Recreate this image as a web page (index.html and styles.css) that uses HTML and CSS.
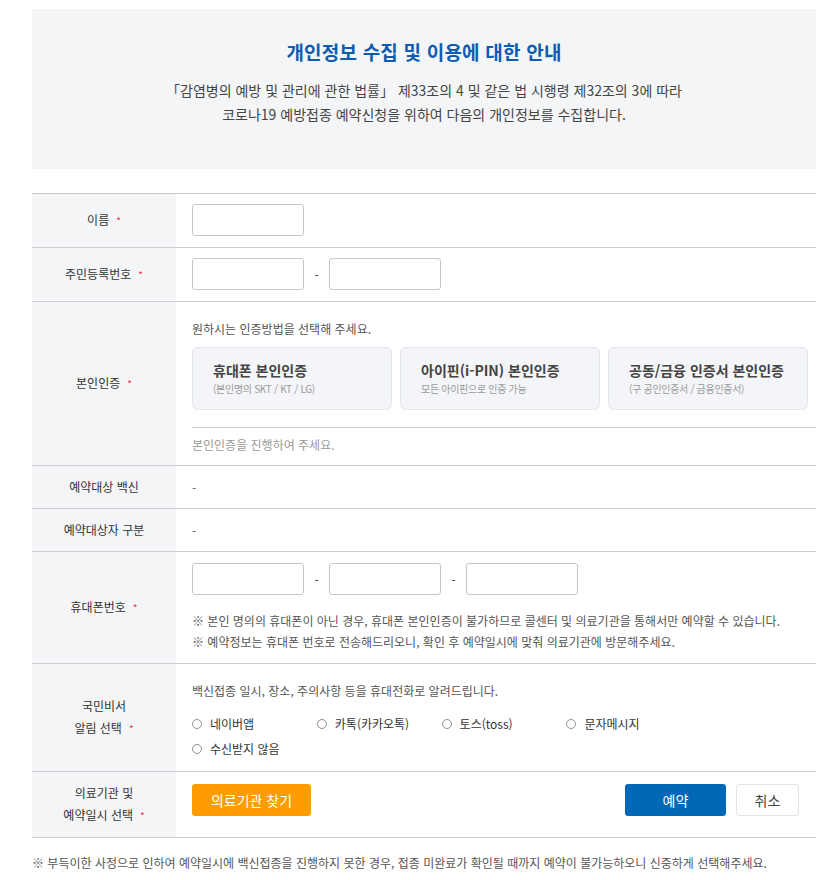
FILE: index.html
```html
<!DOCTYPE html>
<html lang="ko">
<head>
<meta charset="utf-8">
<title>코로나19 예방접종 예약</title>
<link rel="stylesheet" href="styles.css">
</head>
<body>
<div class="page">
  <section class="intro">
    <h1 class="intro-title">개인정보 수집 및 이용에 대한 안내</h1>
    <p class="intro-text">「감염병의 예방 및 관리에 관한 법률」 제33조의 4 및 같은 법 시행령 제32조의 3에 따라<br>코로나19 예방접종 예약신청을 위하여 다음의 개인정보를 수집합니다.</p>
  </section>

  <div class="form">
    <div class="row">
      <div class="label"><span class="label-text">이름<span class="req">*</span></span></div>
      <div class="cell cell-input"><input type="text" class="field"></div>
    </div>

    <div class="row">
      <div class="label"><span class="label-text">주민등록번호<span class="req">*</span></span></div>
      <div class="cell cell-input">
        <div class="inputs"><input type="text" class="field"><span class="dash">-</span><input type="text" class="field"></div>
      </div>
    </div>

    <div class="row">
      <div class="label"><span class="label-text">본인인증<span class="req">*</span></span></div>
      <div class="cell cell-auth">
        <p class="guide">원하시는 인증방법을 선택해 주세요.</p>
        <div class="cards">
          <div class="card"><div class="card-title">휴대폰 본인인증</div><div class="card-sub">(본인명의 SKT / KT / LG)</div></div>
          <div class="card"><div class="card-title">아이핀(i-PIN) 본인인증</div><div class="card-sub">모든 아이핀으로 인증 가능</div></div>
          <div class="card"><div class="card-title">공동/금융 인증서 본인인증</div><div class="card-sub">(구 공인인증서 / 금융인증서)</div></div>
        </div>
        <p class="hint">본인인증을 진행하여 주세요.</p>
      </div>
    </div>

    <div class="row">
      <div class="label"><span class="label-text">예약대상 백신</span></div>
      <div class="cell cell-plain">-</div>
    </div>

    <div class="row">
      <div class="label"><span class="label-text">예약대상자 구분</span></div>
      <div class="cell cell-plain">-</div>
    </div>

    <div class="row">
      <div class="label"><span class="label-text">휴대폰번호<span class="req">*</span></span></div>
      <div class="cell cell-phone">
        <div class="inputs"><input type="text" class="field"><span class="dash">-</span><input type="text" class="field"><span class="dash">-</span><input type="text" class="field"></div>
        <div class="notes">
          <p class="note">※ 본인 명의의 휴대폰이 아닌 경우, 휴대폰 본인인증이 불가하므로 콜센터 및 의료기관을 통해서만 예약할 수 있습니다.</p>
          <p class="note">※ 예약정보는 휴대폰 번호로 전송해드리오니, 확인 후 예약일시에 맞춰 의료기관에 방문해주세요.</p>
        </div>
      </div>
    </div>

    <div class="row">
      <div class="label"><span class="label-text">국민비서<br>알림 선택<span class="req">*</span></span></div>
      <div class="cell cell-notify">
        <p class="notify-text">백신접종 일시, 장소, 주의사항 등을 휴대전화로 알려드립니다.</p>
        <div class="radios">
          <label class="radio"><input type="radio" name="noti">네이버앱</label>
          <label class="radio"><input type="radio" name="noti">카톡(카카오톡)</label>
          <label class="radio"><input type="radio" name="noti">토스(toss)</label>
          <label class="radio"><input type="radio" name="noti">문자메시지</label>
          <label class="radio"><input type="radio" name="noti">수신받지 않음</label>
        </div>
      </div>
    </div>

    <div class="row">
      <div class="label"><span class="label-text">의료기관 및<br>예약일시 선택<span class="req">*</span></span></div>
      <div class="cell cell-actions">
        <button type="button" class="btn btn-find">의료기관 찾기</button>
        <div class="actions">
          <button type="button" class="btn btn-submit">예약</button>
          <button type="button" class="btn btn-cancel">취소</button>
        </div>
      </div>
    </div>
  </div>

  <p class="footnote">※ 부득이한 사정으로 인하여 예약일시에 백신접종을 진행하지 못한 경우, 접종 미완료가 확인될 때까지 예약이 불가능하오니 신중하게 선택해주세요.</p>
</div>
</body>
</html>
```

FILE: styles.css
```css
body {
  margin: 0;
  background: #fff;
  color: #333;
  font-family: "Noto Sans CJK KR", "Noto Sans", sans-serif;
}

.page {
  width: 784px;
  margin: 9px 0 0 32px;
}

.intro {
  background: #f4f5f7;
  height: 160px;
  box-sizing: border-box;
  padding-top: 30px;
  text-align: center;
}

.intro-title {
  margin: 0;
  font-size: 19px;
  line-height: 26px;
  font-weight: 700;
  letter-spacing: 0.2px;
  color: #0d5cb0;
}

.intro-text {
  margin: 13px 0 0;
  font-size: 14px;
  line-height: 24px;
  color: #444;
}

.form {
  margin-top: 24px;
  border-top: 1px solid #cbcbd0;
}

.row {
  display: grid;
  grid-template-columns: 144px 1fr;
  border-bottom: 1px solid #cbcbd0;
}

.label {
  background: #f4f5f7;
  display: flex;
  align-items: center;
  justify-content: center;
  text-align: center;
  font-size: 12px;
  line-height: 22px;
  color: #333;
}

.req {
  color: #e8334a;
  font-size: 10px;
  margin-left: 7px;
}

.cell {
  font-size: 12px;
  color: #333;
}

.cell-input {
  padding: 10px 0 11px 16px;
}

.inputs {
  display: flex;
  align-items: center;
}

.field {
  box-sizing: border-box;
  width: 112px;
  height: 32px;
  margin: 0;
  padding: 0 8px;
  border: 1px solid #c6c6c8;
  border-radius: 3px;
  background: #fff;
  font: inherit;
}

.dash {
  width: 5px;
  margin: 0 10px;
  text-align: center;
  color: #333;
}

.cell-auth {
  padding: 18px 0 11px 16px;
}

.guide {
  margin: 0;
  line-height: 18px;
  color: #555;
}

.cards {
  display: grid;
  grid-template-columns: repeat(3, 200px);
  gap: 8px;
  margin-top: 9px;
}

.card {
  box-sizing: border-box;
  height: 63px;
  padding: 12px 0 0 20px;
  background: #f4f5f8;
  border: 1px solid #e4e6ed;
  border-radius: 6px;
}

.card-title {
  font-size: 14px;
  line-height: 20px;
  font-weight: 700;
  color: #444;
}

.card-sub {
  margin-top: 2px;
  font-size: 10px;
  line-height: 14px;
  color: #999;
  letter-spacing: -0.3px;
}

.hint {
  margin: 17px 0 0;
  padding-top: 8px;
  border-top: 1px solid #cbcbd0;
  line-height: 18px;
  color: #999;
}

.cell-plain {
  height: 42px;
  padding-left: 16px;
  display: flex;
  align-items: center;
  color: #666;
}

.cell-phone {
  padding: 11px 0 11px 16px;
}

.notes {
  margin-top: 15px;
}

.note {
  margin: 0;
  line-height: 21px;
  color: #555;
}

.cell-notify {
  padding: 17px 0 10px 16px;
}

.notify-text {
  margin: 0;
  line-height: 20px;
  color: #555;
}

.radios {
  display: grid;
  grid-template-columns: repeat(4, 124.8px);
  margin-top: 10px;
}

.radio {
  display: flex;
  align-items: center;
  height: 25px;
  color: #333;
}

.radio input {
  appearance: none;
  -webkit-appearance: none;
  box-sizing: border-box;
  width: 10px;
  height: 10px;
  margin: 0 8px 0 0;
  border: 1px solid #8f8f94;
  border-radius: 50%;
  background: #fff;
}

.cell-actions {
  display: flex;
  justify-content: space-between;
  align-items: flex-start;
  padding: 12px 17px 21px 16px;
}

.actions {
  display: flex;
  gap: 10px;
}

.btn {
  box-sizing: border-box;
  height: 32px;
  margin: 0;
  padding: 0;
  border-radius: 3px;
  font-family: inherit;
  font-size: 14px;
  cursor: pointer;
}

.btn-find {
  width: 119px;
  border: 0;
  background: #ff9d00;
  color: #fff;
}

.btn-submit {
  width: 101px;
  border: 0;
  background: #0068b7;
  color: #fff;
}

.btn-cancel {
  width: 63px;
  border: 1px solid #e2e3ea;
  background: #fff;
  color: #444;
}

.footnote {
  margin: 15px 0 0;
  font-size: 12px;
  line-height: 20px;
  color: #555;
}
```
